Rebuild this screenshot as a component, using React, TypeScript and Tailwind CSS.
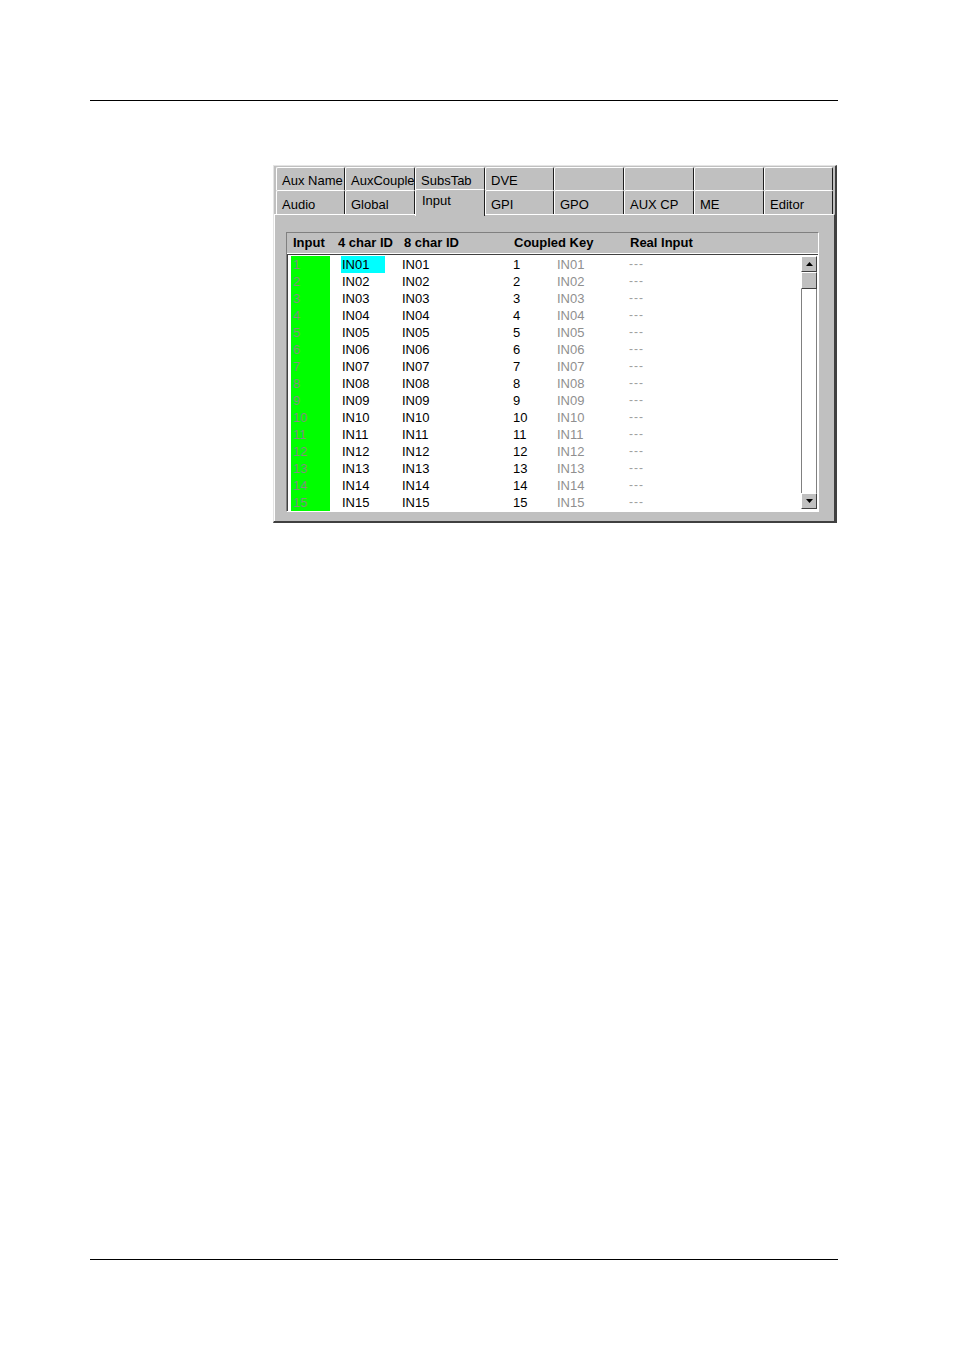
import React from 'react';

const TOP_TABS = ['Aux Name', 'AuxCouple', 'SubsTab', 'DVE', '', '', '', ''];
const BOTTOM_TABS = ['Audio', 'Global', 'Input', 'GPI', 'GPO', 'AUX CP', 'ME', 'Editor'];
const TAB_WIDTHS = [69, 70, 70, 69, 70, 70, 70, 69];

const pad = (n: number) => (n < 10 ? `0${n}` : `${n}`);
const ROWS = Array.from({ length: 15 }, (_, i) => i + 1);

const Tab: React.FC<{ label: string; width: number; selected?: boolean; lower?: boolean }> = ({ label, width, selected, lower }) => {
  if (selected) {
    return (
      <div
        className="relative z-10 -mb-[2px] -mt-[1px] h-[27px] border-t border-l border-white border-r border-r-[#202020] bg-[#c0c0c0] pl-[6px] pt-[2px] rounded-t-[2px] leading-[18px] whitespace-nowrap overflow-hidden"
        style={{ width }}
      >
        {label}
      </div>
    );
  }
  return (
    <div
      className={`h-full border-t border-l border-white border-r border-r-[#202020] bg-[#c0c0c0] pl-[5px] rounded-t-[2px] leading-[16px] whitespace-nowrap overflow-hidden ${lower ? 'pt-[6px]' : 'pt-[5px]'}`}
      style={{ width }}
    >
      {label}
    </div>
  );
};

const Row: React.FC<{ n: number }> = ({ n }) => {
  const id = `IN${pad(n)}`;
  return (
    <div className="flex h-[17px] leading-[17px]">
      <div className="w-[39px] shrink-0 bg-[#00ff00] pl-[2px] text-[#7f8f7f]">{n}</div>
      <div className="w-[11px] shrink-0" />
      <div className="w-[61px] shrink-0">
        <span className={`inline-block w-[44px] pl-[1px] ${n === 1 ? 'bg-[#00ffff]' : ''}`}>{id}</span>
      </div>
      <div className="w-[111px] shrink-0">{id}</div>
      <div className="w-[44px] shrink-0">{n}</div>
      <div className="w-[72px] shrink-0 text-[#8f8f8f]">{id}</div>
      <div className="text-[12px] tracking-[1px] text-[#a0a0a0]">---</div>
    </div>
  );
};

const ScrollButton: React.FC<{ up?: boolean }> = ({ up }) => (
  <div className="flex h-[16px] w-[16px] items-center justify-center border-t border-l border-white border-r border-b border-r-[#404040] border-b-[#404040] bg-[#c0c0c0]">
    <svg width="7" height="4" viewBox="0 0 7 4">
      {up ? <polygon points="3.5,0 7,4 0,4" fill="#000" /> : <polygon points="0,0 7,0 3.5,4" fill="#000" />}
    </svg>
  </div>
);

export default function App() {
  return (
    <div className="min-h-[1350px] bg-white pt-[100px] text-[13px] text-black" style={{ fontFamily: '"Liberation Sans", Arial, sans-serif' }}>
      <div className="ml-[90px] h-px w-[748px] bg-black" />

      {/* panel */}
      <div className="ml-[273px] mt-[64px] flex h-[358px] w-[564px] flex-col border-t border-l border-t-[#e4e4e4] border-l-[#e4e4e4] border-r-2 border-b-2 border-r-[#404040] border-b-[#404040] bg-[#c0c0c0]">
        <div className="flex flex-col pl-[2px] pt-px">
          <div className="flex h-[23px]">
            {TOP_TABS.map((t, i) => (
              <Tab key={i} label={t} width={TAB_WIDTHS[i]} />
            ))}
          </div>
          <div className="flex h-[24px]">
            {BOTTOM_TABS.map((t, i) => (
              <Tab key={i} label={t} width={TAB_WIDTHS[i]} selected={t === 'Input'} lower />
            ))}
          </div>
        </div>

        {/* content */}
        <div className="flex-1 border-t border-l border-white border-r border-r-[#404040] pl-[11px] pt-[17px]">
          <div className="w-[533px] border-t border-l border-t-[#808080] border-l-[#808080] border-r border-b border-white">
            <div className="flex h-[21px] items-center border-b border-white font-bold leading-[20px]">
              <div className="w-[51px] shrink-0 pl-[6px]">Input</div>
              <div className="w-[66px] shrink-0">4 char ID</div>
              <div className="w-[110px] shrink-0">8 char ID</div>
              <div className="w-[116px] shrink-0">Coupled Key</div>
              <div>Real Input</div>
            </div>
            <div className="flex h-[257px] border-t border-l border-[#404040] bg-white">
              <div className="flex-1 overflow-hidden pl-[3px] pt-px">
                {ROWS.map((n) => (
                  <Row key={n} n={n} />
                ))}
              </div>
              <div className="mr-px mt-px mb-[2px] flex w-[16px] flex-col">
                <ScrollButton up />
                <div className="h-[17px] border-t border-l border-white border-r border-b border-r-[#404040] border-b-[#404040] bg-[#c0c0c0]" />
                <div className="flex-1 border-x border-[#808080] bg-white" />
                <ScrollButton />
              </div>
            </div>
          </div>
        </div>
      </div>

      <div className="ml-[90px] mt-[736px] h-px w-[748px] bg-black" />
    </div>
  );
}
